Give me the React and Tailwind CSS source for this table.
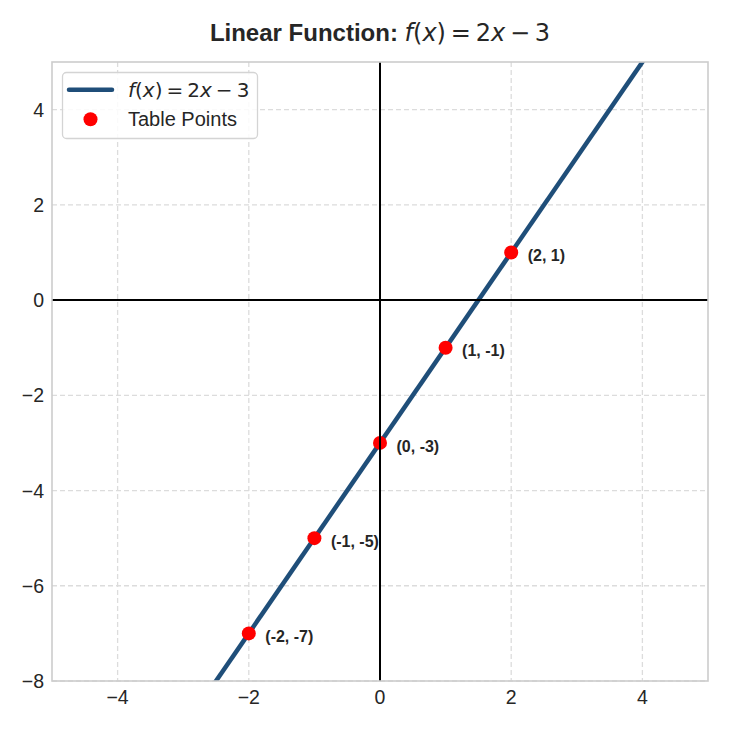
const LEFT = 52;
const RIGHT = 708;
const TOP = 62;
const BOTTOM = 681;

const X = (v) => LEFT + ((v + 5) / 10) * (RIGHT - LEFT);
const Y = (v) => TOP + ((5 - v) / 13) * (BOTTOM - TOP);

const points = [
  [-2, -7],
  [-1, -5],
  [0, -3],
  [1, -1],
  [2, 1],
];

const xTicks = [-4, -2, 0, 2, 4];
const yTicks = [4, 2, 0, -2, -4, -6, -8];

const fmt = (v) => (v < 0 ? `\u2212${Math.abs(v)}` : `${v}`);

const sans = '"Liberation Sans", Arial, sans-serif';
const math = '"DejaVu Sans", sans-serif';

function MathLabel({ x, y, size }) {
  // f(x) = 2x − 3 set the way mathtext does
  const gap = size * 0.2;
  return (
    <text x={x} y={y} fontFamily={math} fontSize={size} fill="#262626">
      <tspan fontStyle="italic">f</tspan>
      <tspan>(</tspan>
      <tspan fontStyle="italic">x</tspan>
      <tspan>)</tspan>
      <tspan dx={gap}>=</tspan>
      <tspan dx={gap}>2</tspan>
      <tspan fontStyle="italic">x</tspan>
      <tspan dx={gap}>{"\u2212"}</tspan>
      <tspan dx={gap}>3</tspan>
    </text>
  );
}

function Chart() {
  return (
    <svg width="730" height="680" viewBox="0 50 730 680" className="block">
      <defs>
        <clipPath id="plot">
          <rect x={LEFT} y={TOP} width={RIGHT - LEFT} height={BOTTOM - TOP} />
        </clipPath>
      </defs>

      {/* grid */}
      <g stroke="#dcdcdc" strokeWidth="1.3" strokeDasharray="5 3">
        {xTicks.map((t) => (
          <line key={`gx${t}`} x1={X(t)} x2={X(t)} y1={TOP} y2={BOTTOM} />
        ))}
        {yTicks.map((t) => (
          <line key={`gy${t}`} x1={LEFT} x2={RIGHT} y1={Y(t)} y2={Y(t)} />
        ))}
      </g>

      {/* line + points */}
      <g clipPath="url(#plot)">
        <line
          x1={X(-5)}
          y1={Y(-13)}
          x2={X(5)}
          y2={Y(7)}
          stroke="#1f4e79"
          strokeWidth="4.5"
        />
        {points.map(([px, py]) => (
          <circle key={`p${px}`} cx={X(px)} cy={Y(py)} r="7" fill="#ff0000" />
        ))}
      </g>

      {points.map(([px, py]) => (
        <text
          key={`l${px}`}
          x={X(px) + 16.5}
          y={Y(py) + 8.7}
          fontFamily={sans}
          fontWeight="700"
          fontSize="16"
          fill="#262626"
        >
          ({px}, {py})
        </text>
      ))}

      {/* zero axes */}
      <line x1={LEFT} x2={RIGHT} y1={Y(0)} y2={Y(0)} stroke="#000" strokeWidth="2" />
      <line x1={X(0)} x2={X(0)} y1={TOP} y2={BOTTOM} stroke="#000" strokeWidth="2" />

      {/* frame */}
      <rect
        x={LEFT}
        y={TOP}
        width={RIGHT - LEFT}
        height={BOTTOM - TOP}
        fill="none"
        stroke="#cccccc"
        strokeWidth="1.6"
      />

      {/* tick labels */}
      <g fontFamily={sans} fontSize="19.5" fill="#262626">
        {xTicks.map((t) => (
          <text key={`tx${t}`} x={X(t)} y="704" textAnchor="middle">
            {fmt(t)}
          </text>
        ))}
        {yTicks.map((t) => (
          <text key={`ty${t}`} x="44" y={Y(t) + 7} textAnchor="end">
            {fmt(t)}
          </text>
        ))}
      </g>

      {/* legend */}
      <rect
        x="62.5"
        y="72.5"
        width="195"
        height="66"
        rx="4"
        fill="#ffffff"
        fillOpacity="0.85"
        stroke="#d4d4d4"
        strokeWidth="1.3"
      />
      <line
        x1="69"
        x2="112"
        y1="89.7"
        y2="89.7"
        stroke="#1f4e79"
        strokeWidth="4.5"
        strokeLinecap="round"
      />
      <MathLabel x={128} y={96.5} size={20} />
      <circle cx="90.5" cy="119.3" r="7" fill="#ff0000" />
      <text x="128" y="126" fontFamily={sans} fontSize="20" fill="#262626">
        Table Points
      </text>
    </svg>
  );
}

export default function App() {
  return (
    <div className="w-[730px] h-[730px] bg-white overflow-hidden">
      <div className="h-[50px] ml-[52px] w-[656px] pt-[20px] text-center leading-[24px] text-[24px] text-[#262626] whitespace-nowrap">
        <span className="font-bold font-['Liberation_Sans',Arial,sans-serif]">
          Linear Function:{" "}
        </span>
        <span className="font-['DejaVu_Sans',sans-serif]">
          <i>f</i>(<i>x</i>)<span className="mx-[0.2em]">=</span>2<i>x</i>
          <span className="mx-[0.2em]">{"\u2212"}</span>3
        </span>
      </div>
      <Chart />
    </div>
  );
}
